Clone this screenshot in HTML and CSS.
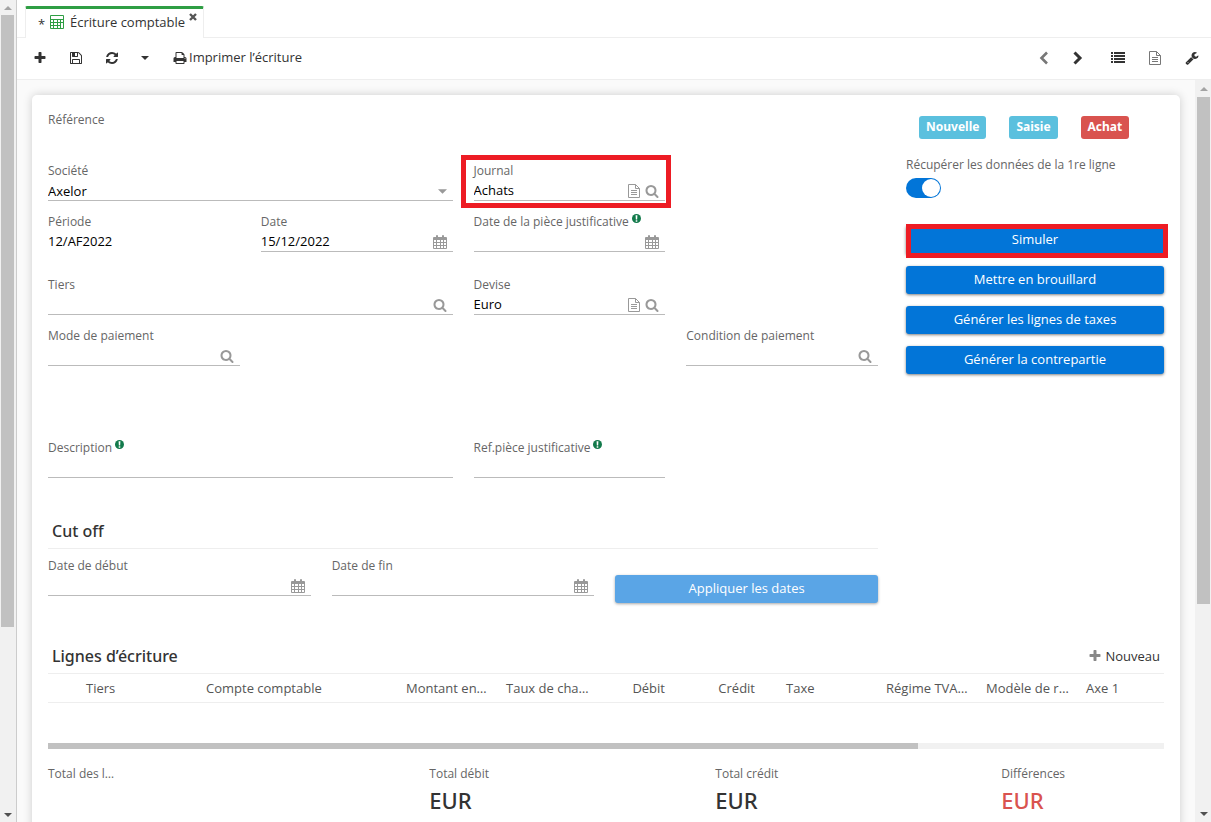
FILE: index.html
```html
<!DOCTYPE html>
<html lang="fr">
<head>
<meta charset="utf-8">
<title>Écriture comptable</title>
<link rel="stylesheet" href="styles.css">
</head>
<body>
<svg class="sprite" aria-hidden="true">
  <symbol id="plus" viewBox="0 0 1792 1792"><path d="M1600 736v192q0 40-28 68t-68 28h-416v416q0 40-28 68t-68 28h-192q-40 0-68-28t-28-68v-416h-416q-40 0-68-28t-28-68v-192q0-40 28-68t68-28h416v-416q0-40 28-68t68-28h192q40 0 68 28t28 68v416h416q40 0 68 28t28 68z"/></symbol>
  <symbol id="save" viewBox="0 0 1792 1792"><path d="M512 1536h768v-384h-768v384zm896 0h128v-896q0-14-10-38.5t-20-34.5l-281-281q-10-10-34-20t-39-10v416q0 40-28 68t-68 28h-576q-40 0-68-28t-28-68v-416h-128v1280h128v-416q0-40 28-68t68-28h832q40 0 68 28t28 68v416zm-384-928v-320q0-13-9.5-22.5t-22.5-9.5h-192q-13 0-22.5 9.5t-9.5 22.5v320q0 13 9.5 22.5t22.5 9.5h192q13 0 22.5-9.5t9.5-22.5zm640 32v928q0 40-28 68t-68 28h-1344q-40 0-68-28t-28-68v-1344q0-40 28-68t68-28h928q40 0 88 20t76 48l280 280q28 28 48 76t20 88z"/></symbol>
  <symbol id="refresh" viewBox="0 0 1792 1792"><path d="M1639 1056q0 5-1 7-64 268-268 434.5t-478 166.5q-146 0-282.5-55t-243.5-157l-129 129q-19 19-45 19t-45-19-19-45v-448q0-26 19-45t45-19h448q26 0 45 19t19 45-19 45l-137 137q71 66 161 102t187 36q134 0 250-65t186-179q11-17 53-117 8-23 30-23h192q13 0 22.5 9.5t9.5 22.5zm25-800v448q0 26-19 45t-45 19h-448q-26 0-45-19t-19-45 19-45l138-138q-148-137-349-137-134 0-250 65t-186 179q-11 17-53 117-8 23-30 23h-199q-13 0-22.5-9.5t-9.5-22.5v-7q65-268 270-434.5t480-166.5q146 0 284 55.5t245 156.5l130-129q19-19 45-19t45 19 19 45z"/></symbol>
  <symbol id="print" viewBox="0 0 1792 1792"><path d="M448 1536h896v-256h-896v256zm0-640h896v-384h-160q-40 0-68-28t-28-68v-160h-640v640zm1152 64q0-26-19-45t-45-19-45 19-19 45 19 45 45 19 45-19 19-45zm128 0v416q0 13-9.5 22.5t-22.5 9.5h-224v160q0 40-28 68t-68 28h-960q-40 0-68-28t-28-68v-160h-224q-13 0-22.5-9.5t-9.5-22.5v-416q0-79 56.5-135.5t135.5-56.5h64v-544q0-40 28-68t68-28h672q40 0 88 20t76 48l152 152q28 28 48 76t20 88v256h64q79 0 135.5 56.5t56.5 135.5z"/></symbol>
  <symbol id="search" viewBox="0 0 1792 1792"><path d="M1216 832q0-185-131.5-316.5t-316.5-131.5-316.5 131.5-131.5 316.5 131.5 316.5 316.5 131.5 316.5-131.5 131.5-316.5zm512 832q0 52-38 90t-90 38q-54 0-90-38l-343-342q-179 124-399 124-143 0-273.5-55.5t-225-150-150-225-55.5-273.5 55.5-273.5 150-225 225-150 273.5-55.5 273.5 55.5 225 150 150 225 55.5 273.5q0 220-124 399l343 343q37 37 37 90z"/></symbol>
  <symbol id="wrench" viewBox="0 0 1792 1792"><path d="M448 1472q0-26-19-45t-45-19-45 19-19 45 19 45 45 19 45-19 19-45zm644-420l-682 682q-37 37-90 37-52 0-91-37l-106-108q-38-36-38-90 0-53 38-91l681-681q39 98 114.5 173.5t173.5 114.5zm634-435q0 39-23 106-47 134-164.5 217.5t-258.5 83.5q-185 0-316.5-131.5t-131.5-316.5 131.5-316.5 316.5-131.5q58 0 121.5 16.5t107.5 46.5q16 11 16 28t-16 28l-293 169v224l193 107q5-3 79-48.5t135.5-81 70.5-35.5q15 0 23.5 10t8.5 25z"/></symbol>
  <symbol id="file" viewBox="0 0 14 14"><path fill="none" stroke="currentColor" d="M1.500.5h7l4 4v9h-11zM8.500 .5v4h4M4 6.500h6M4 8.500h6M4 10.500h6"/></symbol>
  <symbol id="calendar" viewBox="0 0 14 14"><path fill-rule="evenodd" d="M1 2h2V1q0-1 1-1t1 1v1h4V1q0-1 1-1t1 1v1h2q1 0 1 1v10q0 1-1 1H1q-1 0-1-1V3q0-1 1-1zM1 5v2h2V5zM4 5v2h3V5zM8 5v2h2V5zM11 5v2h2V5zM1 8v2h2V8zM4 8v2h3V8zM8 8v2h2V8zM11 8v2h2V8zM1 11v2h2v-2zM4 11v2h3v-2zM8 11v2h2v-2zM11 11v2h2v-2z"/></symbol>
  <symbol id="calc" viewBox="0 0 14 14"><path fill-rule="evenodd" d="M1 0h12q1 0 1 1v12q0 1-1 1H1q-1 0-1-1V1q0-1 1-1zM1 1v3h12V1zM1 5v2h2V5zM4 5v2h3V5zM8 5v2h2V5zM11 5v2h2V5zM1 8v2h2V8zM4 8v2h3V8zM8 8v2h2V8zM1 11v2h2v-2zM4 11v2h3v-2zM8 11v2h2v-2zM11 8v5h2V8z"/></symbol>
  <symbol id="list" viewBox="0 0 14 14"><path d="M0 1h2v2H0zM3 1h11v2H3zM0 4h2v2H0zM3 4h11v2H3zM0 7h2v2H0zM3 7h11v2H3zM0 10h2v2H0zM3 10h11v2H3z"/></symbol>
  <symbol id="prev" viewBox="0 0 14 14"><path fill="none" stroke="currentColor" stroke-width="2.600" d="M10 1.500L4.500 7l5.500 5.500"/></symbol>
  <symbol id="next" viewBox="0 0 14 14"><path fill="none" stroke="currentColor" stroke-width="3" d="M4.500 1.500L10 7l-5.500 5.500"/></symbol>
  <symbol id="close" viewBox="0 0 8 8"><path fill="none" stroke="currentColor" stroke-width="2.400" d="M1 1l6 6M7 1L1 7"/></symbol>
  <symbol id="info" viewBox="0 0 8 8"><circle cx="4" cy="4" r="4"/><path fill="#fff" d="M3.200 1.200h1.600L4.600 4.800H3.400zM3.300 5.500h1.400v1.300H3.300z"/></symbol>
  <symbol id="up" viewBox="0 0 8 4"><path d="M0 4l4-4 4 4z"/></symbol>
  <symbol id="down" viewBox="0 0 8 4"><path d="M0 0h8L4 4z"/></symbol>
</svg>

<div class="scroll scroll-outer" aria-hidden="true">
  <span class="scroll-end"><svg class="arrow"><use href="#up"/></svg></span>
  <span class="scroll-track"><span class="scroll-thumb" style="height:77.3%"></span></span>
  <span class="scroll-end scroll-live"><svg class="arrow"><use href="#down"/></svg></span>
</div>

<div class="app">
  <nav class="tabs">
    <div class="tab"><span class="dirty">*</span><svg class="icon tab-icon"><use href="#calc"/></svg><a class="tab-link" href="#">Écriture comptable</a><button class="tab-close" aria-label="Fermer"><svg><use href="#close"/></svg></button></div>
  </nav>

  <header class="toolbar">
    <button aria-label="Nouveau"><svg class="icon"><use href="#plus"/></svg></button>
    <button aria-label="Enregistrer"><svg class="icon"><use href="#save"/></svg></button>
    <button aria-label="Rafraîchir"><svg class="icon"><use href="#refresh"/></svg></button>
    <button aria-label="Plus"><svg class="arrow"><use href="#down"/></svg></button>
    <button class="print"><svg class="icon"><use href="#print"/></svg><span>Imprimer l’écriture</span></button>
    <div class="tools">
      <button class="muted" aria-label="Précédent"><svg class="icon"><use href="#prev"/></svg></button>
      <button aria-label="Suivant"><svg class="icon"><use href="#next"/></svg></button>
      <div class="views">
        <button aria-label="Liste"><svg class="icon"><use href="#list"/></svg></button>
        <button class="muted" aria-label="Formulaire"><svg class="icon"><use href="#file"/></svg></button>
        <button aria-label="Outils"><svg class="icon"><use href="#wrench"/></svg></button>
      </div>
    </div>
  </header>

  <div class="body">
    <main class="content">
      <form class="card">
        <div class="columns">
          <div class="fields">
            <div class="field c1"><span class="label">Référence</span></div>

            <div class="field wide c1">
              <label for="societe">Société</label>
              <div class="control"><select id="societe"><option>Axelor</option></select><svg class="arrow caret"><use href="#down"/></svg></div>
            </div>
            <div class="field marked c3">
              <label for="journal">Journal</label>
              <div class="control"><input id="journal" value="Achats"><button type="button" aria-label="Ouvrir"><svg class="icon"><use href="#file"/></svg></button><button type="button" aria-label="Chercher"><svg class="icon"><use href="#search"/></svg></button></div>
            </div>

            <div class="field c1"><span class="label">Période</span><span class="value">12/AF2022</span></div>
            <div class="field c2">
              <label for="date">Date</label>
              <div class="control"><input id="date" value="15/12/2022"><button type="button" aria-label="Calendrier"><svg class="icon"><use href="#calendar"/></svg></button></div>
            </div>
            <div class="field c3">
              <label for="piece">Date de la pièce justificative<svg class="info"><use href="#info"/></svg></label>
              <div class="control"><input id="piece"><button type="button" aria-label="Calendrier"><svg class="icon"><use href="#calendar"/></svg></button></div>
            </div>

            <div class="field wide c1 spaced">
              <label for="tiers">Tiers</label>
              <div class="control"><input id="tiers"><button type="button" aria-label="Chercher"><svg class="icon"><use href="#search"/></svg></button></div>
            </div>
            <div class="field c3 spaced">
              <label for="devise">Devise</label>
              <div class="control"><input id="devise" value="Euro"><button type="button" aria-label="Ouvrir"><svg class="icon"><use href="#file"/></svg></button><button type="button" aria-label="Chercher"><svg class="icon"><use href="#search"/></svg></button></div>
            </div>

            <div class="field c1">
              <label for="mode">Mode de paiement</label>
              <div class="control"><input id="mode"><button type="button" aria-label="Chercher"><svg class="icon"><use href="#search"/></svg></button></div>
            </div>
            <div class="field c4">
              <label for="condition">Condition de paiement</label>
              <div class="control"><input id="condition"><button type="button" aria-label="Chercher"><svg class="icon"><use href="#search"/></svg></button></div>
            </div>

            <div class="field wide c1 apart">
              <label for="description">Description<svg class="info"><use href="#info"/></svg></label>
              <div class="control"><input id="description"></div>
            </div>
            <div class="field c3 apart">
              <label for="ref">Ref.pièce justificative<svg class="info"><use href="#info"/></svg></label>
              <div class="control"><input id="ref"></div>
            </div>

            <section class="cutoff">
              <h2 class="title">Cut off</h2>
              <div class="dates">
                <div class="field">
                  <label for="debut">Date de début</label>
                  <div class="control"><input id="debut"><button type="button" aria-label="Calendrier"><svg class="icon"><use href="#calendar"/></svg></button></div>
                </div>
                <div class="field">
                  <label for="fin">Date de fin</label>
                  <div class="control"><input id="fin"><button type="button" aria-label="Calendrier"><svg class="icon"><use href="#calendar"/></svg></button></div>
                </div>
                <button type="button" class="btn apply" disabled>Appliquer les dates</button>
              </div>
            </section>
          </div>

          <aside class="side">
            <div class="badges"><span class="badge">Nouvelle</span><span class="badge">Saisie</span><span class="badge danger">Achat</span></div>
            <label for="fetch">Récupérer les données de la 1re ligne</label>
            <input class="switch" type="checkbox" id="fetch" checked>
            <div class="actions">
              <div class="btn-mark"><button type="button" class="btn">Simuler</button></div>
              <button type="button" class="btn">Mettre en brouillard</button>
              <button type="button" class="btn">Générer les lignes de taxes</button>
              <button type="button" class="btn">Générer la contrepartie</button>
            </div>
          </aside>
        </div>

        <section class="lines">
          <div class="lines-head"><h2 class="title">Lignes d’écriture</h2><button type="button" class="new"><svg class="icon"><use href="#plus"/></svg>Nouveau</button></div>
          <table class="grid">
            <colgroup><col class="w-pick"><col class="w-mid"><col class="w-large"><col class="w-std"><col class="w-std"><col class="w-num"><col class="w-num"><col class="w-std"><col class="w-std"><col class="w-std"><col></colgroup>
            <thead><tr><th></th><th>Tiers</th><th>Compte comptable</th><th>Montant en…</th><th>Taux de cha…</th><th class="num">Débit</th><th class="num">Crédit</th><th>Taxe</th><th>Régime TVA…</th><th>Modèle de r…</th><th>Axe 1</th></tr></thead>
          </table>
          <div class="hscroll" aria-hidden="true"><span class="hthumb" style="width:78%"></span></div>
          <div class="totals">
            <div class="total t1"><span class="label">Total des l…</span></div>
            <div class="total t3"><span class="label">Total débit</span><span class="amount">EUR</span></div>
            <div class="total t3"><span class="label">Total crédit</span><span class="amount">EUR</span></div>
            <div class="total t2"><span class="label">Différences</span><span class="amount negative">EUR</span></div>
          </div>
        </section>
      </form>
    </main>
    <div class="scroll scroll-inner" aria-hidden="true">
      <span class="scroll-end"><svg class="arrow"><use href="#up"/></svg></span>
      <span class="scroll-track"><span class="scroll-thumb" style="height:71.6%"></span></span>
      <span class="scroll-end scroll-live"><svg class="arrow"><use href="#down"/></svg></span>
    </div>
  </div>
</div>
</body>
</html>
```

FILE: styles.css
```css
* { box-sizing: border-box; }

body {
  display: flex;
  height: 100vh;
  margin: 0;
  overflow: hidden;
  background: #fff;
  color: #333;
  font-family: "Open Sans", "Noto Sans", sans-serif;
  font-size: 13px;
  line-height: 18px;
}

button, input, select { font: inherit; color: inherit; }

button {
  display: flex;
  align-items: center;
  padding: 0;
  border: 0;
  background: none;
}

svg { display: block; flex: none; fill: currentColor; }
.sprite { position: absolute; width: 0; height: 0; }
.icon { width: 14px; height: 14px; }
.arrow { width: 8px; height: 4px; }

/* scroll bars */
.scroll {
  display: flex;
  flex: none;
  flex-direction: column;
  width: 16px;
  padding: 0 1px 0 2px;
  background: #f1f1f1;
  color: #a3a3a3;
}
.scroll-outer { width: 17px; padding: 0 2px 0 1px; border-right: 1px solid #ccc; }
.scroll-end { display: flex; align-items: center; justify-content: center; height: 15px; }
.scroll-inner .scroll-end { height: 17px; }
.scroll-live { color: #505050; }
.scroll-track { flex: 1; }
.scroll-thumb { display: block; background: #c1c1c1; }

.app { display: flex; flex: 1; flex-direction: column; min-width: 0; }

/* tabs */
.tabs {
  display: flex;
  height: 38px;
  padding: 6px 8px 0;
  border-bottom: 1px solid #eee;
}
.tab {
  display: flex;
  height: 32px;
  padding: 6px 6px 0 12px;
  border: 1px solid #eee;
  border-top: 3px solid #2f9e44;
  border-bottom: 0;
  border-radius: 2px 2px 0 0;
  background: #fff;
}
.dirty { width: 12px; }
.tab-icon { margin-right: 6px; color: #2f9e44; }
.tab-link { color: #333; text-decoration: none; line-height: 14px; }
.tab-close { align-self: flex-start; margin-left: 4px; color: #555; }
.tab-close svg { width: 8px; height: 8px; }
.tab .tab-close { margin-top: -2px; }

/* toolbar */
.toolbar {
  display: flex;
  align-items: center;
  height: 42px;
  padding: 0 12px 2px 16px;
  border-bottom: 1px solid #eee;
}
.toolbar button { justify-content: center; height: 28px; margin-right: 22px; }
.toolbar .print { gap: 2px; margin-left: 2px; }
.print span { padding-bottom: 2px; }
.tools { display: flex; margin-left: auto; }
.toolbar .tools button { margin: 0 0 0 19px; }
.views { display: flex; gap: 23px; margin-left: 27px; }
.toolbar .views button { margin: 0; }
.toolbar .muted { color: #777; }

.body { display: flex; flex: 1; min-height: 0; }
.content { flex: 1; min-width: 0; padding: 15px; overflow: hidden; background: #fafafa; }
.card {
  min-height: 100vh;
  padding: 16px;
  border-radius: 5px;
  background: #fff;
  box-shadow: 0 0 10px rgba(0, 0, 0, 0.18);
}

/* form */
.columns { display: grid; grid-template-columns: 830fr 258fr; gap: 28px; }
.fields {
  display: grid;
  grid-template-columns: repeat(4, minmax(0, 1fr));
  gap: 12px 21px;
  align-content: start;
}
.field { position: relative; height: 39px; }
.c1 { grid-column: 1; }
.c2 { grid-column: 2; }
.c3 { grid-column: 3; }
.c4 { grid-column: 4; }
.c1.wide { grid-column: 1 / span 2; }
.spaced { margin-top: 12px; }
.apart { margin-top: 61px; }

label, .label { display: flex; color: #666; font-size: 12px; white-space: nowrap; }
.info { width: 9px; height: 9px; margin: 1px 0 0 3px; color: #127a4b; }
.control {
  display: flex;
  align-items: center;
  gap: 4px;
  height: 21px;
  padding: 2px 6px 0 0;
  border-bottom: 1px solid #bbb;
  color: #999;
}
.control input, .control select {
  flex: 1;
  min-width: 0;
  height: 18px;
  padding: 0 0 2px;
  border: 0;
  outline: 0;
  appearance: none;
  background: none;
  color: #000;
}
.value { display: block; padding-top: 1px; color: #000; }
.caret { width: 9px; height: 5px; }

/* red callouts drawn over the form */
.marked::after, .btn-mark::after {
  position: absolute;
  inset: -7px -6px -7px -13px;
  border: 5px solid #ed1c24;
  content: "";
  pointer-events: none;
}
.btn-mark { position: relative; }
.btn-mark .btn { border-radius: 0; }
.btn-mark::after { inset: -2px -4px -4px 0; }

.title {
  margin: 0;
  padding-left: 4px;
  color: #333;
  font-family: "Noto Sans", "Open Sans", sans-serif;
  font-size: 16px;
  font-weight: 500;
  line-height: 22px;
}
.cutoff { grid-column: 1 / -1; margin-top: 30px; }
.cutoff .title { padding-bottom: 6px; border-bottom: 1px solid #eee; }
.dates {
  display: grid;
  grid-template-columns: repeat(3, minmax(0, 1fr));
  gap: 21px;
  padding-top: 8px;
}
.btn {
  justify-content: center;
  width: 100%;
  height: 28px;
  padding-bottom: 2px;
  border-radius: 3px;
  background: #0275d8;
  box-shadow: 0 1px 3px rgba(0, 0, 0, 0.5);
  color: #fff;
}
.apply { margin-top: 18px; background: #5aa5e6; box-shadow: 0 1px 3px rgba(0, 0, 0, 0.35); }

/* side panel */
.badges { display: flex; gap: 23px; padding: 5px 0 17px 13px; }
.badge {
  padding: 2px 7px 3px;
  border-radius: 3px;
  background: #5bc0de;
  color: #fff;
  font-family: "Noto Sans", "Open Sans", sans-serif;
  font-size: 12px;
  font-weight: 700;
}
.danger { background: #d9534f; }
.switch {
  display: block;
  width: 35px;
  height: 20px;
  margin: 4px 0 28px;
  padding: 1px;
  border-radius: 10px;
  appearance: none;
  background: #0275d8;
}
.switch::before {
  display: block;
  width: 18px;
  height: 18px;
  border-radius: 50%;
  background: #fff;
  content: "";
}
.switch:checked::before { margin-left: auto; }
.actions { display: grid; gap: 12px; }

/* lines */
.lines { margin-top: 42px; }
.lines-head {
  display: flex;
  align-items: center;
  justify-content: space-between;
  padding: 0 4px 6px 0;
  border-bottom: 1px solid #eee;
}
.new { gap: 3px; }
.new .icon { color: #888; }
.grid { width: 100%; border-collapse: separate; border-spacing: 0; table-layout: fixed; }
.grid th {
  height: 29px;
  padding: 0 6px;
  border-bottom: 1px solid #eee;
  color: #555;
  font-weight: 400;
  text-align: left;
  white-space: nowrap;
}
.grid .num { padding-right: 25px; text-align: right; }
.w-pick { width: 32px; }
.w-mid { width: 120px; }
.w-large { width: 200px; }
.w-std { width: 100px; }
.w-num { width: 90px; }
.hscroll { margin-top: 40px; background: #f1f1f1; }
.hthumb { display: block; height: 6px; background: #c1c1c1; }

.totals {
  display: grid;
  grid-template-columns: repeat(12, minmax(0, 1fr));
  gap: 28px;
  padding-top: 16px;
}
.t1 { grid-column: 1; }
.t2 { grid-column: span 2; }
.t3 { grid-column: span 3; }
.t1 + .t3 { grid-column: 5 / span 3; }
.amount {
  display: block;
  font-family: "Noto Sans", "Open Sans", sans-serif;
  font-size: 22px;
  font-weight: 500;
  line-height: 34px;
}
.negative { color: #d9534f; }
```
